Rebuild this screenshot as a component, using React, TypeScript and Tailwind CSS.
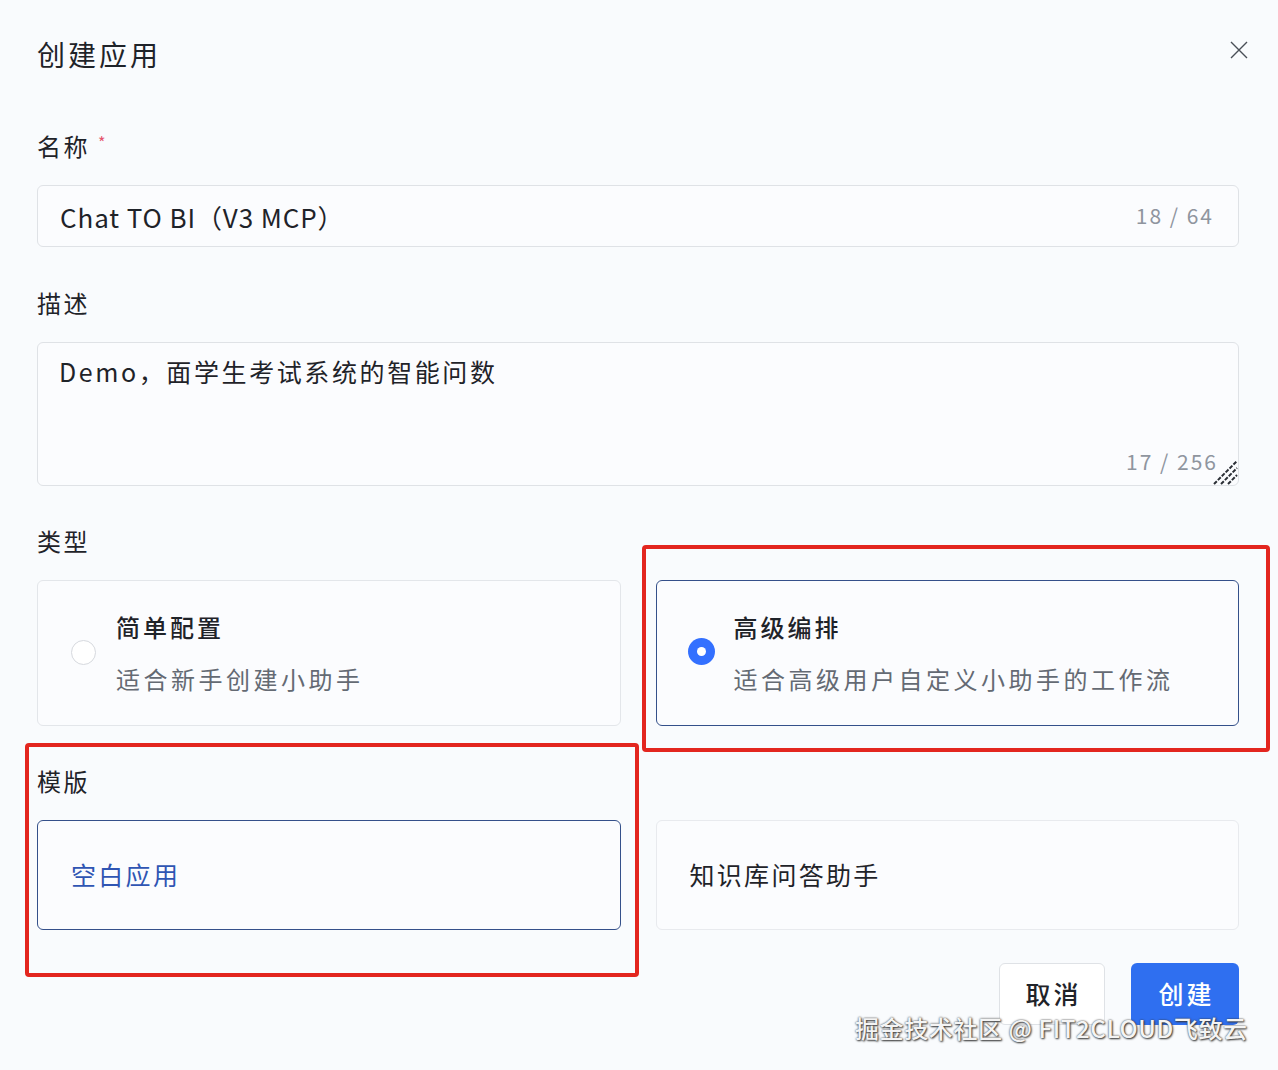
import React from "react";

const font = { fontFamily: '"Noto Sans CJK SC", "Noto Sans", sans-serif' };

function Label({ children, required }: { children: React.ReactNode; required?: boolean }) {
  return (
    <div className="flex h-[32px] items-center text-[24px] leading-[32px] tracking-[2.5px] text-[#1f2329]">
      <span>{children}</span>
      {required && <span className="ml-[8px] -mt-[8px] text-[16px] text-[#e5546d]">*</span>}
    </div>
  );
}

export default function App() {
  return (
    <div style={font} className="relative h-[1070px] w-[1278px] overflow-hidden bg-[#f9fbfd]">
      <div className="flex flex-col px-[37px] pr-[39px] pt-[34px]">
        {/* header */}
        <div className="flex h-[40px] items-center justify-between">
          <h1 className="text-[28px] font-normal leading-[40px] tracking-[3px] text-[#1f2329]">创建应用</h1>
          <svg width="20" height="20" viewBox="0 0 20 20" className="mr-[-10px] mt-[-8px]" fill="none" stroke="#4a4f57" strokeWidth="1.4">
            <path d="M2 2 L18 18 M18 2 L2 18" />
          </svg>
        </div>

        <div className="mt-[56px]">
          <Label required>名称</Label>
        </div>
        <div className="mt-[23px] flex h-[62px] items-center justify-between rounded-[6px] border border-[#dfe2e6] bg-[#fbfcfe] pl-[22px] pr-[24px]">
          <span className="text-[26px] tracking-[0.9px] text-[#1f2329]">Chat TO BI（V3 MCP）</span>
          <span className="text-[21px] tracking-[2px] text-[#8f959e]">18 / 64</span>
        </div>

        <div className="mt-[40px]">
          <Label>描述</Label>
        </div>
        <div className="relative mt-[23px] h-[144px] rounded-[6px] border border-[#dfe2e6] bg-[#fbfcfe] pl-[21px] pt-[10px]">
          <span className="text-[25px] tracking-[2.6px] text-[#1f2329]">Demo，面学生考试系统的智能问数</span>
          <span className="absolute bottom-[8px] right-[20px] text-[21px] tracking-[2px] text-[#8f959e]">17 / 256</span>
          <svg width="28" height="28" viewBox="0 0 28 28" className="absolute bottom-[0px] right-[0px]" stroke="#2b2f36" strokeWidth="2" strokeDasharray="4 1.5">
            <path d="M4 27 L27 4 M11 27 L27 11 M18 27 L27 18" />
          </svg>
        </div>

        <div className="mt-[39px]">
          <Label>类型</Label>
        </div>
        <div className="mt-[23px] grid grid-cols-2 gap-x-[35px]">
          <div className="flex h-[146px] items-center rounded-[6px] border border-[#e3e6ea] bg-[#fbfcfe] pl-[33px]">
            <div className="-mt-[2px] h-[25px] w-[25px] rounded-full border border-[#d6d9de] bg-white" />
            <div className="ml-[20px] flex flex-col">
              <span className="text-[24px] font-medium leading-[32px] tracking-[3px] text-[#1f2329]">简单配置</span>
              <span className="mt-[20px] text-[24px] leading-[32px] tracking-[3.5px] text-[#646a73]">适合新手创建小助手</span>
            </div>
          </div>
          <div className="flex h-[146px] items-center rounded-[6px] border-[1.5px] border-[#34508a] bg-[#fbfcfe] pl-[31px]">
            <div className="-mt-[3px] flex h-[27px] w-[27px] items-center justify-center rounded-full bg-[#3370ff]">
              <div className="h-[9px] w-[9px] rounded-full bg-white" />
            </div>
            <div className="ml-[19px] flex flex-col">
              <span className="text-[24px] font-medium leading-[32px] tracking-[3px] text-[#1f2329]">高级编排</span>
              <span className="mt-[20px] text-[24px] leading-[32px] tracking-[3.5px] text-[#646a73]">适合高级用户自定义小助手的工作流</span>
            </div>
          </div>
        </div>

        <div className="mt-[39px]">
          <Label>模版</Label>
        </div>
        <div className="mt-[23px] grid grid-cols-2 gap-x-[35px]">
          <div className="flex h-[110px] items-center rounded-[6px] border-[1.5px] border-[#34508a] bg-[#fbfcfe] pl-[33px]">
            <span className="text-[25px] tracking-[2.3px] text-[#2f55b3]">空白应用</span>
          </div>
          <div className="flex h-[110px] items-center rounded-[6px] border border-[#e8eaee] bg-[#fbfcfe] pl-[33px]">
            <span className="text-[25px] tracking-[2.3px] text-[#1f2329]">知识库问答助手</span>
          </div>
        </div>

        <div className="mt-[33px] flex justify-end gap-[26px]">
          <button className="h-[62px] w-[106px] rounded-[6px] border border-[#dfe2e6] bg-white pl-[3px] text-[25px] font-medium tracking-[3px] text-[#1f2329]">取消</button>
          <button className="h-[62px] w-[108px] rounded-[6px] bg-[#2f6ff0] pl-[3px] text-[25px] font-medium tracking-[3px] text-white">创建</button>
        </div>
      </div>

      {/* annotation boxes */}
      <div className="absolute left-[642px] top-[545px] h-[207px] w-[628px] rounded-[4px] border-[4px] border-[#e3261f]" />
      <div className="absolute left-[25px] top-[743px] h-[234px] w-[614px] rounded-[4px] border-[4px] border-[#e3261f]" />

      {/* watermark */}
      <div className="absolute left-[855px] top-[1010px] text-[24px] font-medium leading-[36px] tracking-[0.6px] text-[#f4f4f4] [text-shadow:0_0_2px_#3a3a3a,1px_1px_2px_#3a3a3a]">
        掘金技术社区 @ FIT2CLOUD飞致云
      </div>
    </div>
  );
}
